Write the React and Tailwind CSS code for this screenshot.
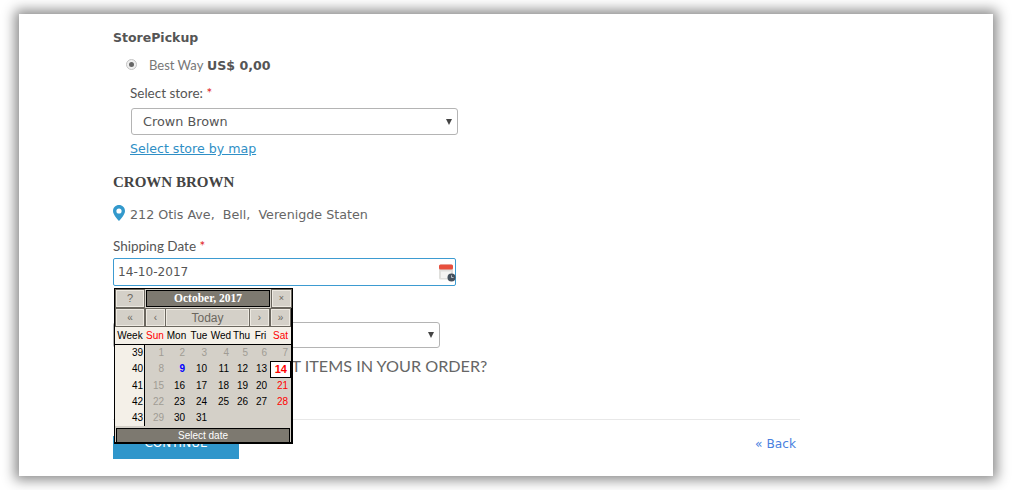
import React from "react";

const weeks = [
  { no: 39, days: [1, 2, 3, 4, 5, 6, 7] },
  { no: 40, days: [8, 9, 10, 11, 12, 13, 14] },
  { no: 41, days: [15, 16, 17, 18, 19, 20, 21] },
  { no: 42, days: [22, 23, 24, 25, 26, 27, 28] },
  { no: 43, days: [29, 30, 31, "", "", "", ""] },
];

const dayNames = ["Sun", "Mon", "Tue", "Wed", "Thu", "Fri", "Sat"];
const gridCols = "grid grid-cols-[30px_20px_23px_22px_22px_19px_19px_21px]";

const dayClass = (day, idx) => {
  if (day === 14) return "bg-white text-[#ff0000] font-bold border border-black text-[11px] pr-[3px]";
  if (day === 9) return "text-[#0000ff] font-bold pr-[3px]";
  if (day === "") return "";
  if (idx === 0) return "text-[#a09c94] pr-[1px]";
  if (day < 8) return "text-[#a09c94] pr-[3px]";
  if (idx === 6) return "text-[#ff0000] pr-[3px]";
  return "text-black pr-[3px]";
};

const CalButton = ({ className, children }) => (
  <div
    className={`flex items-center justify-center bg-[#d4d0c8] border border-[#eeeae2] outline outline-1 outline-[#6b675f] text-[#6b675f] ${className}`}
  >
    {children}
  </div>
);

const Calendar = () => (
  <div className="absolute left-[95px] top-[274px] w-[179px] h-[156px] bg-[#d4d0c8] border-r-2 border-b-2 border-l border-t border-black font-['Liberation_Sans',sans-serif] text-[10px] leading-none">
    <div className="flex h-[19px] pt-[1px] gap-[2px] pl-[1px]">
      <CalButton className="w-[28px] h-[17px] text-[11px]">?</CalButton>
      <div className="w-[124px] h-[17px] bg-[#7d7970] border border-black text-white font-bold font-['Liberation_Serif',serif] text-[11.5px] flex items-center justify-center">
        October, 2017
      </div>
      <CalButton className="w-[19px] h-[17px] text-[9px]">×</CalButton>
    </div>
    <div className="flex h-[19px] pt-[1px] gap-[1px] pl-[1px]">
      <CalButton className="w-[28px] h-[17px] text-[10px] mr-[1px]">«</CalButton>
      <CalButton className="w-[19px] h-[17px] text-[10px]">‹</CalButton>
      <CalButton className="w-[83px] h-[17px] text-[12px]">Today</CalButton>
      <CalButton className="w-[19px] h-[17px] text-[10px] mr-[1px]">›</CalButton>
      <CalButton className="w-[19px] h-[17px] text-[10px]">»</CalButton>
    </div>
    <div className={`${gridCols} h-[18px] bg-[#f4f0e8] items-center border-b border-black text-center`}>
      <div className="text-black">Week</div>
      {dayNames.map((name, i) => (
        <div key={name} className={i === 0 || i === 6 ? "text-[#ff0000]" : "text-black"}>
          {name}
        </div>
      ))}
    </div>
    <div className="flex flex-col">
      {weeks.map((week) => (
        <div key={week.no} className={`${gridCols} h-[16.3px] items-center text-center`}>
          <div className="h-full flex items-center justify-end pr-[1px] bg-[#f4f0e8] border-r border-black text-black">
            {week.no}
          </div>
          {week.days.map((day, i) => (
            <div key={i} className={`h-full flex items-center justify-end ${dayClass(day, i)}`}>
              {day}
            </div>
          ))}
        </div>
      ))}
    </div>
    <div className="h-[15px] mx-[1px] mt-[2px] bg-[#7d7970] border border-black text-white text-[10px] flex items-center justify-center">
      Select date
    </div>
  </div>
);

const CalendarIcon = () => (
  <svg width="17" height="18" viewBox="0 0 17 18" className="absolute right-[-1px] top-[5px]">
    <rect x="0" y="0.5" width="14" height="15" rx="1.5" fill="#dfdfdc" />
    <rect x="0" y="0.5" width="14" height="5" rx="1.5" fill="#e8503e" />
    <rect x="2" y="7.5" width="10" height="6.5" fill="#f4f4f2" />
    <circle cx="12.5" cy="13.5" r="4" fill="#44505c" />
    <path d="M12.5 11.3V13.5H14.5" stroke="#cfd6dc" strokeWidth="0.8" fill="none" />
  </svg>
);

const PinIcon = () => (
  <svg width="12" height="16" viewBox="0 0 12 16" className="mb-[4px]">
    <path
      fillRule="evenodd"
      d="M6 0C2.7 0 0 2.6 0 5.9 0 9.6 4.4 14 6 16c1.6-2 6-6.4 6-10.1C12 2.6 9.3 0 6 0Zm0 3.4a2.6 2.6 0 1 1 0 5.2 2.6 2.6 0 0 1 0-5.2Z"
      fill="#3399cc"
    />
  </svg>
);

const SelectBox = ({ className, children }) => (
  <div
    className={`relative w-[327px] flex items-center border border-[#b4b4b4] rounded-[3px] bg-white ${className}`}
  >
    <span className="pl-[11px] text-[12.8px] text-[#555]">{children}</span>
    <span className="absolute right-[5px] top-1/2 -translate-y-1/2 w-0 h-0 border-x-[3.5px] border-x-transparent border-t-[6px] border-t-[#444]" />
  </div>
);

export default function App() {
  return (
    <div className="h-[490px] w-[1012px] bg-white pl-[19px] pt-[14px] overflow-hidden">
      <div className="relative w-[974px] h-[462px] bg-white shadow-[0_0_12px_4px_#8a8a8a] pl-[94px] overflow-hidden font-['DejaVu_Sans',sans-serif] text-[#555]">
        <h3 className="pt-[16px] h-[34px] text-[12.5px] leading-[16px] font-bold text-[#555]">StorePickup</h3>

        <div className="flex items-center h-[24px] mt-[6px] pl-[13px]">
          <span className="w-[11px] h-[11px] rounded-full border border-[#c4c4c4] bg-[#f0f0f0] flex items-center justify-center mb-[3px]">
            <span className="w-[5px] h-[5px] rounded-full bg-[#666]" />
          </span>
          <span className="ml-[12px] w-[58px] font-['Lato',sans-serif] text-[13px] text-[#777]">Best Way</span>
          <span className="text-[12.6px] font-bold text-[#555]">US$ 0,00</span>
        </div>

        <div className="pl-[18px]">
          <div className="-ml-[1px] mt-[7px] h-[16px] leading-[16px] font-['Lato',sans-serif] text-[13.5px] text-[#555]">
            Select store: <span className="text-[#e02020]">*</span>
          </div>
          <SelectBox className="h-[27px] mt-[7px]">Crown Brown</SelectBox>
          <a className="-ml-[1px] block mt-[6px] text-[12.6px] leading-[16px] text-[#2f8fc6] underline">Select store by map</a>
        </div>

        <div className="mt-[17px] h-[16px] leading-[16px] font-['Liberation_Serif',serif] font-bold text-[15px] text-[#444]">
          CROWN BROWN
        </div>

        <div className="flex items-center mt-[15px] h-[20px]">
          <PinIcon />
          <span className="ml-[5px] text-[12.7px] text-[#666] whitespace-pre">212 Otis Ave,  Bell,  Verenigde Staten</span>
        </div>

        <div className="mt-[13px] h-[16px] leading-[16px] font-['Lato',sans-serif] text-[13.5px] text-[#555]">
          Shipping Date <span className="text-[#e02020]">*</span>
        </div>

        <div className="relative w-[343px] h-[28px] mt-[4px] pt-[1px] border border-[#3d9bd1] rounded-[2px] flex items-center pl-[4px] text-[12.1px] text-[#555]">
          14-10-2017
          <CalendarIcon />
        </div>

        <SelectBox className="h-[26px] mt-[36px]">&nbsp;</SelectBox>

        <div className="mt-[8px] h-[20px] leading-[20px] pl-[64px] font-['Lato',sans-serif] text-[16.2px] text-[#666] whitespace-nowrap">
          ARE THERE GIFT ITEMS IN YOUR ORDER?
        </div>

        <div className="w-[687px] mt-[43px] border-t border-[#e8e8e8]" />

        <div className="flex w-[687px] items-start justify-between mt-[16px]">
          <button className="w-[126px] h-[23px] bg-[#2f96cb] text-white text-[12px] leading-[14px] pb-[9px]">CONTINUE</button>
          <a className="mr-[4px] text-[12.2px] leading-[14px] mt-[1px] text-[#4a7fe0]">« Back</a>
        </div>

        <Calendar />
      </div>
    </div>
  );
}
